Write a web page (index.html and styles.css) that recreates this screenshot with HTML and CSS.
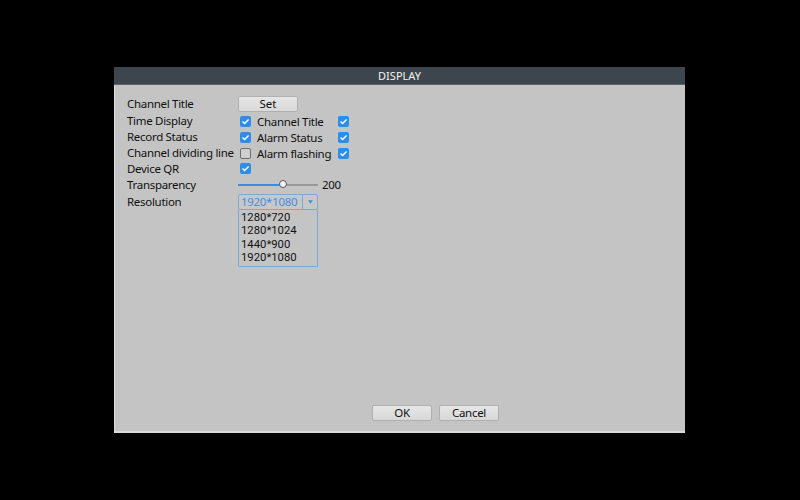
FILE: index.html
```
<!DOCTYPE html>
<html>
<head>
<meta charset="utf-8">
<link rel="stylesheet" href="styles.css">
</head>
<body>
<div class="window">
  <div class="titlebar">DISPLAY</div>
  <div class="content">
    <div class="form">
      <div class="row">
        <div class="label">Channel Title</div>
        <button class="btn set">Set</button>
      </div>
      <div class="row">
        <div class="label">Time Display</div>
        <div class="pair">
          <span class="cb on"><svg viewBox="0 0 11 11"><path d="M2.5 5.6 L4.6 7.6 L8.6 3.4"/></svg></span>
          <span class="sub">Channel Title</span>
          <span class="cb on"><svg viewBox="0 0 11 11"><path d="M2.5 5.6 L4.6 7.6 L8.6 3.4"/></svg></span>
        </div>
      </div>
      <div class="row">
        <div class="label">Record Status</div>
        <div class="pair">
          <span class="cb on"><svg viewBox="0 0 11 11"><path d="M2.5 5.6 L4.6 7.6 L8.6 3.4"/></svg></span>
          <span class="sub">Alarm Status</span>
          <span class="cb on"><svg viewBox="0 0 11 11"><path d="M2.5 5.6 L4.6 7.6 L8.6 3.4"/></svg></span>
        </div>
      </div>
      <div class="row">
        <div class="label">Channel dividing line</div>
        <div class="pair">
          <span class="cb off"></span>
          <span class="sub">Alarm flashing</span>
          <span class="cb on"><svg viewBox="0 0 11 11"><path d="M2.5 5.6 L4.6 7.6 L8.6 3.4"/></svg></span>
        </div>
      </div>
      <div class="row">
        <div class="label">Device QR</div>
        <div class="pair">
          <span class="cb on"><svg viewBox="0 0 11 11"><path d="M2.5 5.6 L4.6 7.6 L8.6 3.4"/></svg></span>
        </div>
      </div>
      <div class="row">
        <div class="label">Transparency</div>
        <div class="sliderwrap">
          <div class="slider">
            <div class="fill"></div>
            <div class="knob"></div>
          </div>
          <span class="val">200</span>
        </div>
      </div>
      <div class="row res">
        <div class="label">Resolution</div>
        <div class="combo">
          <div class="select">
            <span class="selval">1920*1080</span>
            <span class="arrow"><svg viewBox="0 0 6 4"><path d="M0 0 H6 L3 4 Z"/></svg></span>
          </div>
          <div class="list">
            <div class="opt">1280*720</div>
            <div class="opt">1280*1024</div>
            <div class="opt">1440*900</div>
            <div class="opt">1920*1080</div>
          </div>
        </div>
      </div>
    </div>
    <div class="footer">
      <button class="btn">OK</button>
      <button class="btn">Cancel</button>
    </div>
  </div>
</div>
</body>
</html>
```
FILE: styles.css
```
html, body {
  margin: 0;
  padding: 0;
  background: #000;
  width: 800px;
  height: 500px;
  overflow: hidden;
  font-family: "Noto Sans", "Open Sans", sans-serif;
}
.window {
  margin: 67px 0 0 114px;
  width: 571px;
  height: 366px;
  display: flex;
  flex-direction: column;
  background: #c4c4c4;
  box-sizing: border-box;
  border-left: 1px solid #dadada;
  border-bottom: 2px solid #dadada;
}
.titlebar {
  height: 17px;
  background: #3d464d;
  border-bottom: 1px solid #5c656b;
  color: #f2f2f2;
  font-size: 11px;
  line-height: 17px;
  text-align: center;
  margin-left: -1px;
}
.content {
  flex: 1;
  display: flex;
  flex-direction: column;
  padding: 11px 0 0 12px;
}
.form {
  flex: 1;
  display: flex;
  flex-direction: column;
}
.row {
  display: flex;
  align-items: center;
  height: 16px;
  font-size: 11.5px;
  letter-spacing: -0.3px;
  color: #111;
}
.row:nth-child(2) { margin-top: 1px; }
.row:nth-child(5) { margin-top: -0.5px; }
.row.res {
  align-items: flex-start;
  margin-top: 1.5px;
}
.label {
  width: 111px;
  flex: none;
  white-space: nowrap;
  line-height: 16px;
}
.btn {
  font-family: inherit;
  font-size: 11.5px;
  color: #111;
  width: 60px;
  height: 16px;
  padding: 0;
  border: 1px solid #b0b0b0;
  border-radius: 2px;
  background: linear-gradient(#e6e6e6, #d8d8d8);
  line-height: 14px;
}
.pair {
  display: flex;
  align-items: center;
}
.cb {
  width: 11px;
  height: 11px;
  border-radius: 2px;
  box-sizing: border-box;
  margin-left: 2px;
  display: inline-flex;
}
.cb.on {
  background: #2e8de8;
}
.cb.off {
  border: 1px solid #6e6e6e;
  background: #cfcfcf;
}
.cb svg {
  width: 11px;
  height: 11px;
}
.cb svg path {
  fill: none;
  stroke: #fff;
  stroke-width: 1.4;
}
.sub {
  margin-left: 6px;
  width: 79px;
  white-space: nowrap;
}
.sliderwrap {
  display: flex;
  align-items: center;
}
.slider {
  position: relative;
  width: 80px;
  height: 2px;
  background: #9a9a9a;
}
.fill {
  width: 45px;
  height: 2px;
  background: #3a8ee0;
}
.knob {
  position: absolute;
  left: 41px;
  top: -4px;
  width: 8px;
  height: 8px;
  border-radius: 50%;
  background: #f4f4f4;
  border: 1px solid #555;
  box-sizing: border-box;
}
.val {
  margin-left: 4px;
}
.combo {
  width: 80px;
  display: flex;
  flex-direction: column;
}
.select {
  height: 16px;
  box-sizing: border-box;
  border: 1px solid #7fa7d3;
  border-radius: 2px;
  display: flex;
  align-items: center;
  background: #c8c8c8;
}
.selval {
  flex: 1;
  color: #4a8ed8;
  padding-left: 2px;
  line-height: 14px;
}
.arrow {
  width: 14px;
  height: 14px;
  border-left: 1px solid #7fa7d3;
  display: flex;
  align-items: center;
  justify-content: center;
}
.arrow svg {
  width: 5px;
  height: 4px;
  fill: #4a8ed8;
}
.list {
  border: 1px solid #7fa7d3;
  border-top: none;
  border-radius: 0 0 2px 2px;
  padding: 1px 0 1px 2px;
  display: flex;
  flex-direction: column;
}
.opt {
  height: 13.4px;
  line-height: 13.4px;
  color: #111;
  font-family: Roboto, "Noto Sans", sans-serif;
  font-size: 11.3px;
  letter-spacing: 0;
}
.footer {
  display: flex;
  gap: 7px;
  padding: 0 0 10px 245px;
}
.footer .btn {
  width: 60px;
  letter-spacing: -0.3px;
}
```
